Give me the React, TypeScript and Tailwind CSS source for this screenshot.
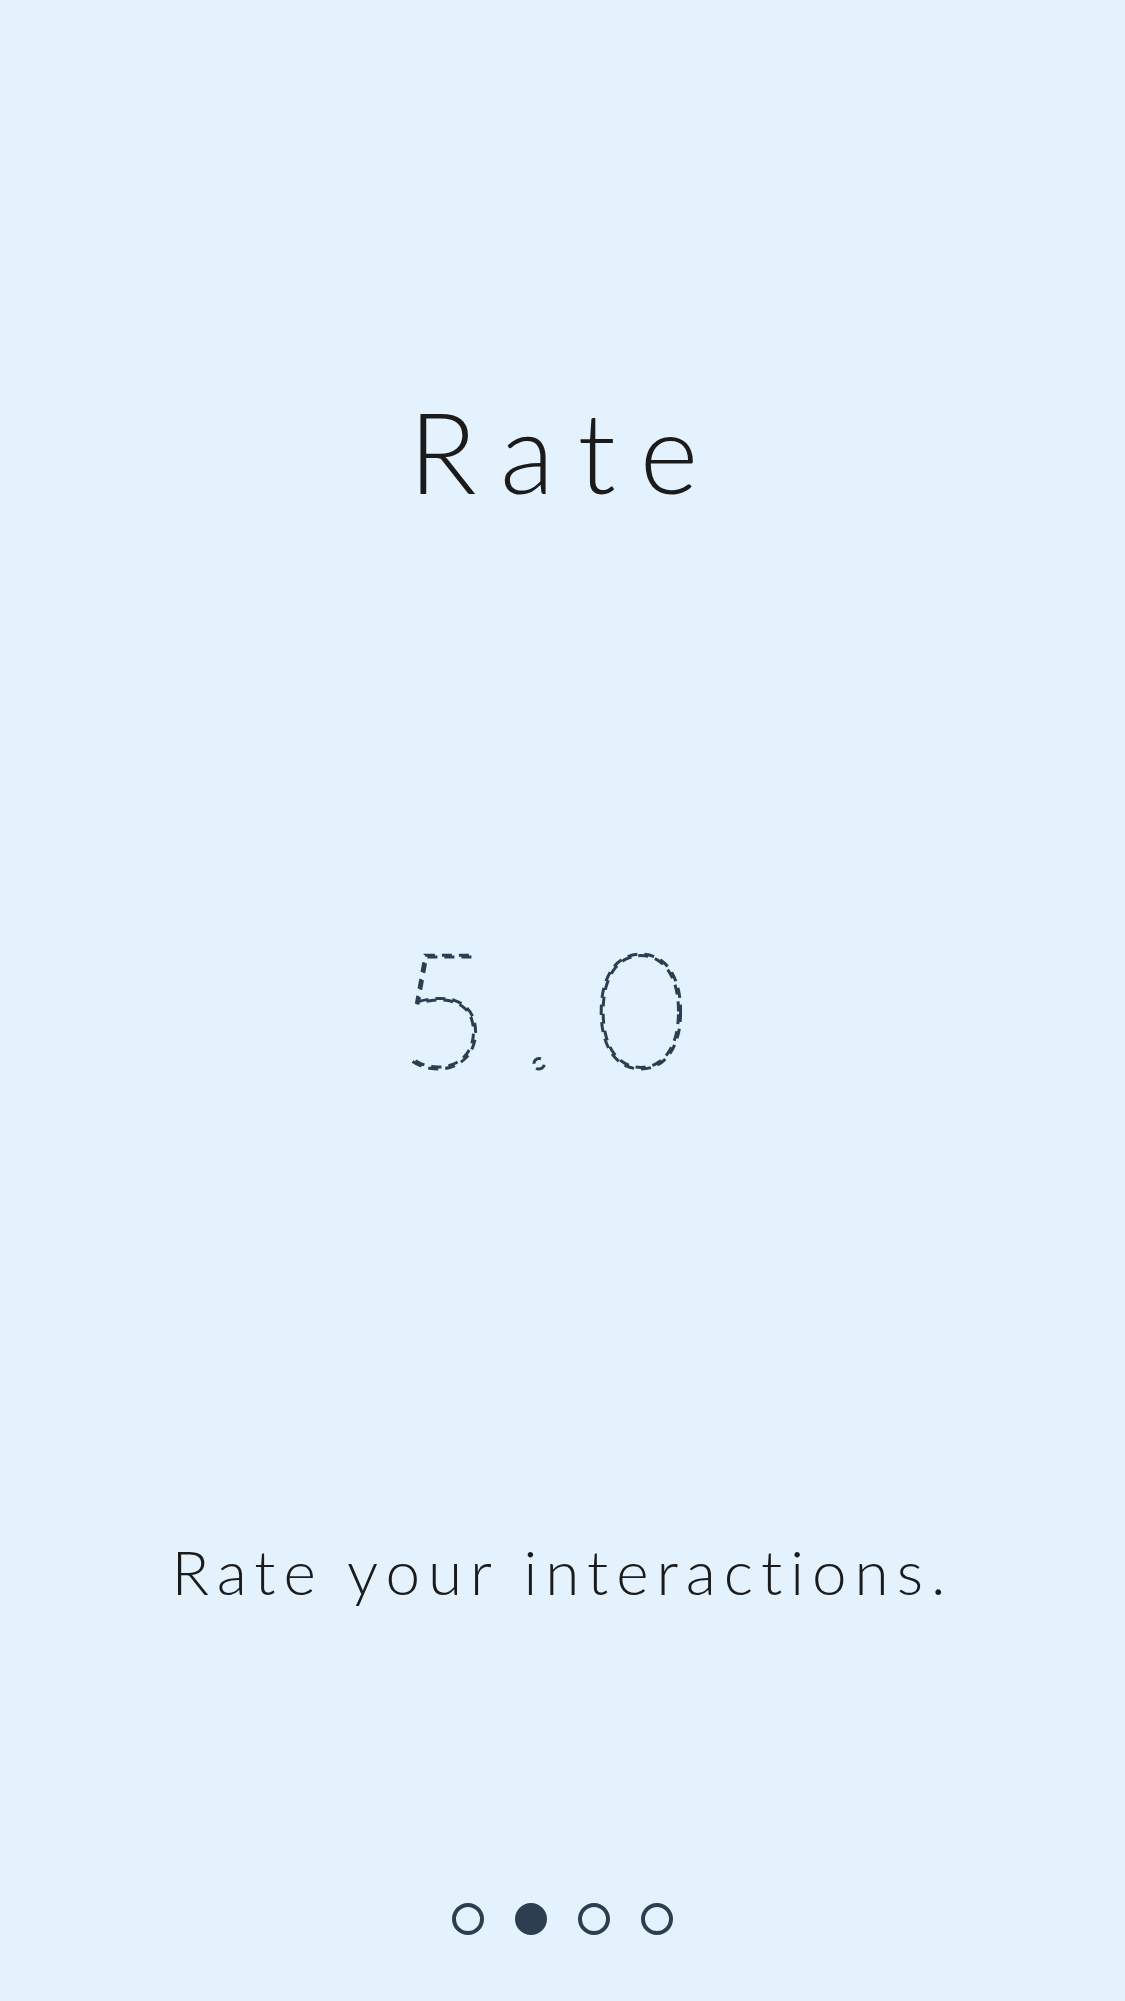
import React from 'react';

const Dots = ({ active }: { active: number }) => (
  <div className="flex items-center justify-center gap-[31px]">
    {[0, 1, 2, 3].map((i) => (
      <span
        key={i}
        className={`block w-[32px] h-[32px] rounded-full border-[4px] border-[#2c3e50] ${i === active ? 'bg-[#2c3e50]' : 'bg-transparent'}`}
      />
    ))}
  </div>
);

const App = () => {
  return (
    <div className="w-full h-[2001px] bg-[#e3f2fd] flex flex-col items-center pt-[171px] font-['Lato',sans-serif] text-[#1b1b1b] overflow-hidden">
      {/* title */}
      <div className="h-[560px] w-full flex items-center justify-center">
        <h1 className="text-[112px] leading-none font-light tracking-[24px] mr-[-6px]">Rate</h1>
      </div>

      {/* score, dashed outline */}
      <div className="h-[560px] w-full flex items-center justify-center">
        <svg width="1125" height="200" viewBox="0 0 1125 200" className="block">
          <text
            y="157"
            fontFamily="Lato, sans-serif"
            fontWeight={100}
            fontSize="160"
            fill="none"
            stroke="#2c3e50"
            strokeWidth="3"
            strokeDasharray="10 7"
          >
            <tspan x="444" textAnchor="middle">5</tspan>
            <tspan x="539" textAnchor="middle">.</tspan>
            <tspan x="641" textAnchor="middle">0</tspan>
          </text>
        </svg>
      </div>

      {/* caption */}
      <div className="h-[560px] w-full flex items-center justify-center">
        <p className="text-[62px] leading-none font-light tracking-[8px]">Rate your interactions.</p>
      </div>

      <div className="mt-[52px]">
        <Dots active={1} />
      </div>
    </div>
  );
};

export default App;
